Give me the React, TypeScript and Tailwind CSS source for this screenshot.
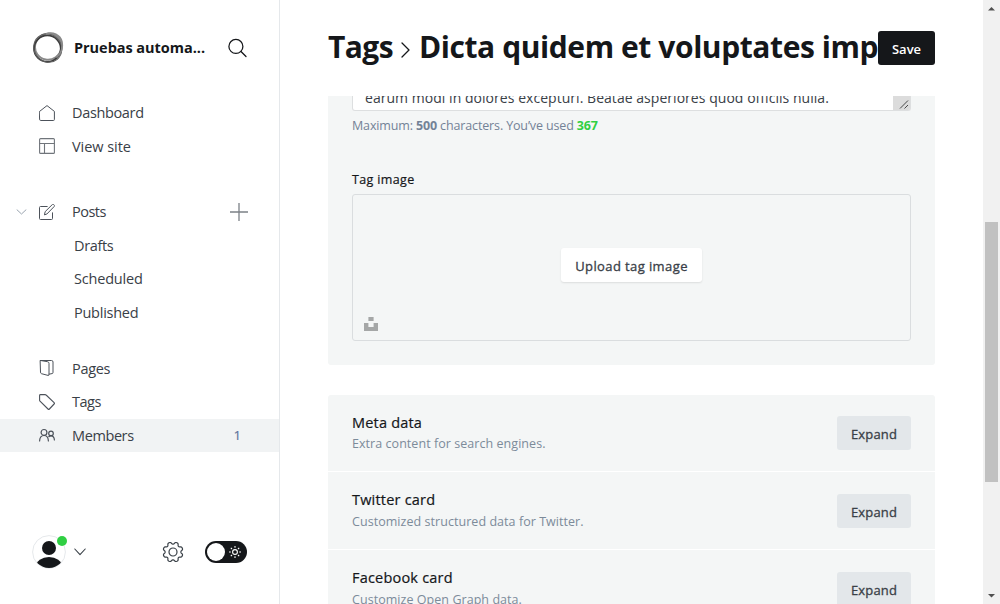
import React from "react";

const line = {
  fill: "none",
  stroke: "currentColor",
  strokeLinecap: "round" as const,
  strokeLinejoin: "round" as const,
};

// Outline of an eight-toothed gear centred in a 22px box.
const gearOutline =
  Array.from({ length: 96 }, (_, i) => {
    const angle = (i / 96) * Math.PI * 2;
    const radius = 8.9 + 1.2 * Math.tanh(1.6 * Math.cos(8 * (angle - Math.PI / 8)) + 0.3);
    const x = (11 + radius * Math.cos(angle)).toFixed(2);
    const y = (11 + radius * Math.sin(angle)).toFixed(2);
    return `${i === 0 ? "M" : "L"}${x} ${y}`;
  }).join("") + "Z";

function NavItem({ icon, label, tracking, className = "", children }: {
  icon: React.ReactNode;
  label: string;
  tracking: string;
  className?: string;
  children?: React.ReactNode;
}) {
  return (
    <a className={`flex h-[33.5px] items-center pl-[39px] ${className}`}>
      <span className="flex w-[33px] shrink-0 text-[#4c525a]">{icon}</span>
      <span className={`flex-1 pt-px ${tracking}`}>{label}</span>
      {children}
    </a>
  );
}

function SubItem({ label, tracking }: { label: string; tracking: string }) {
  return <a className={`flex h-[33.5px] items-center pl-[74px] pt-px ${tracking}`}>{label}</a>;
}

function Sidebar() {
  return (
    <aside className="flex h-full w-[280px] shrink-0 flex-col border-r border-[#e5e8eb] text-[14.5px] text-[#394047]">
      <div className="flex h-24 items-center pl-8 pr-[32px]">
        <svg className="shrink-0" width="32" height="32" viewBox="0 0 32 32" fill="none">
          <ellipse cx="17" cy="15" rx="13.400" ry="13" stroke="#8a8a8a" strokeWidth="2" transform="rotate(-35 16 16)" />
          <ellipse cx="15.400" cy="16.600" rx="13.400" ry="13.200" stroke="#3c3c3c" strokeWidth="1.800" />
          <ellipse cx="15.900" cy="16.200" rx="14.700" ry="13.600" stroke="#606060" strokeWidth="1" transform="rotate(50 16 16)" />
          <path d="M14 2C21-.5 28 3 29.800 9.500c1.200 6-.5 12-5.500 16" stroke="#8a8a8a" strokeWidth="1.800" />
        </svg>
        <span className="ml-[10px] w-[140px] shrink-0 whitespace-nowrap text-[14.5px] font-bold tracking-[-0.04px] text-[#15171a]">
          Pruebas automa...
        </span>
        <svg className="ml-[13px] shrink-0" width="20" height="20" viewBox="0 0 20 20" {...line} stroke="#15171a" strokeWidth="1.25">
          <circle cx="8.9" cy="8.4" r="7" />
          <path d="M14 13.5l5 5" />
        </svg>
      </div>

      <nav className="flex h-[414px] flex-col">
        <NavItem label="Dashboard" tracking="tracking-[-0.35px]" icon={
          <svg width="16" height="16" viewBox="0 0 16 16" {...line}>
            <path d="M.6 6.4 8 .6l7.4 5.8v8.1a1 1 0 0 1-1 1H1.600a1 1 0 0 1-1-1z" />
          </svg>
        } />
        <NavItem label="View site" tracking="tracking-[-0.05px]" icon={
          <svg width="16" height="16" viewBox="0 0 16 16" {...line} stroke="#70757b" strokeWidth="1.1">
            <rect x=".6" y=".6" width="14.8" height="14.8" rx="1" />
            <path d="M.6 5.500h14.800M5.500 5.500v9.900" />
          </svg>
        } />

        <div className="mt-8 flex h-[33.5px] items-center">
          <svg className="ml-4 mr-[12px]" width="11" height="6" viewBox="0 0 11 6" {...line} stroke="#9aa4af">
            <path d="M1 .8l4.500 4.200L10 .8" />
          </svg>
          <span className="flex w-[33px]">
            <svg className="text-[#4c525a]" width="16" height="16" viewBox="0 0 16 16" {...line}>
              <path d="M13.500 8.800v5.700a1 1 0 0 1-1 1h-11a1 1 0 0 1-1-1v-11a1 1 0 0 1 1-1h6.700" />
              <path d="M5.500 10.500l.7-2.900 7-6.900c.6-.5 1.300-.4 1.800.1s.6 1.200.1 1.800l-6.900 7.100z" />
            </svg>
          </span>
          <span className="flex-1 tracking-[-0.5px]">Posts</span>
          <svg className="mr-[31px]" width="18" height="18" viewBox="0 0 18 18" fill="none" stroke="#7c8187" strokeWidth="1.300">
            <path d="M9 0v18M0 9h18" />
          </svg>
        </div>
        <SubItem label="Drafts" tracking="tracking-[-0.35px]" />
        <SubItem label="Scheduled" tracking="tracking-[-0.2px]" />
        <SubItem label="Published" tracking="tracking-[-0.25px]" />

        <NavItem className="mt-[22.500px]" label="Pages" tracking="tracking-[-0.3px]" icon={
          <svg width="16" height="16" viewBox="0 0 16 16" {...line}>
            <path d="M1.500.5 8.500 1.700q1.500.3 1.500 1.700v11.200q0 1.100-1 .8L2.500 13.700q-1-.3-1-1.200z" />
            <path d="M1.500.5h11q1.500 0 1.500 1.500v10.500q0 1-1 1.100L10 14.200" />
          </svg>
        } />
        <NavItem label="Tags" tracking="tracking-[-0.5px]" icon={
          <svg width="16" height="16" viewBox="0 0 16 16" {...line} strokeWidth="1.100">
            <path d="M1.500.6h4.600q.6 0 1 .4l8 7.600q.7.700 0 1.400l-4.700 5q-.7.700-1.400 0L1 7.200Q.6 6.800.6 6.200V1.500q0-.9.9-.9z" />
          </svg>
        } />
        <NavItem className="bg-[#f1f3f4]" label="Members" tracking="tracking-[-0.4px]" icon={
          <svg width="16" height="16" viewBox="0 0 16 16" {...line} strokeWidth="1.200">
            <circle cx="5" cy="5.400" r="2.900" />
            <circle cx="12" cy="6.400" r="2.300" />
            <path d="M.6 14q.2-5.500 4.400-5.500T9.400 14M9.800 9.700q1-.9 2.200-.9 3.200 0 3.400 4.200" />
          </svg>
        }>
          <span className="mr-[38px] pt-[3px] text-[12.500px] text-[#5d7199] [-webkit-text-stroke:0.2px]">1</span>
        </NavItem>
      </nav>

      <div className="mt-[24px] flex h-9 items-center">
        <div className="relative ml-8 h-[34px] w-[34px]">
          <svg width="34" height="34" viewBox="0 0 34 34">
            <defs><clipPath id="avatar"><circle cx="17" cy="17" r="16" /></clipPath></defs>
            <circle cx="17" cy="17" r="16.400" fill="#fff" stroke="#e5e8eb" />
            <g clipPath="url(#avatar)" fill="#15171a">
              <circle cx="17" cy="13" r="7" />
              <ellipse cx="17" cy="31.500" rx="13" ry="9.500" />
            </g>
          </svg>
          <span className="absolute left-[25px] top-[1px] h-[10px] w-[10px] rounded-full bg-[#30cf43]" />
        </div>
        <svg className="ml-2" width="12" height="8" viewBox="0 0 12 8" {...line} stroke="#394047" strokeWidth="1.100">
          <path d="M.8 1 6 6.600 11.200 1" />
        </svg>
        <svg className="ml-[76px]" width="22" height="22" viewBox="0 0 22 22" {...line} stroke="#394047" strokeWidth="1.200">
          <circle cx="11" cy="11" r="4" />
          <path d={gearOutline} />
        </svg>
        <div className="ml-[21px] flex h-[22px] w-[42px] items-center justify-between rounded-full bg-[#15171a] pl-[2px] pr-[6px]">
          <span className="h-[18px] w-[18px] rounded-full bg-white" />
          <svg width="12" height="12" viewBox="0 0 12 12" fill="none" stroke="#fff" strokeWidth="1.100">
            <circle cx="6" cy="6" r="2.400" />
            <path d="M6 0v1.800M6 10.200V12M0 6h1.800M10.200 6H12M1.800 1.800 3 3M9 9l1.200 1.200M1.800 10.200 3 9M9 3l1.200-1.200" />
          </svg>
        </div>
      </div>
    </aside>
  );
}

function ExpandRow({ title, text, first = false }: { title: string; text: string; first?: boolean }) {
  return (
    <section className={`flex shrink-0 justify-between px-6 ${first ? "h-[76px] pt-[21px]" : "h-[78px] border-t border-white pt-[22px]"}`}>
      <div className={`whitespace-nowrap ${first ? "-mt-[4px]" : "-mt-[5px]"}`}>
        <h4 className={`text-[14.500px] font-medium tracking-[0.2px] text-[#15171a] [-webkit-text-stroke:0.2px] ${first ? "leading-[21px]" : "leading-[22px]"}`}>{title}</h4>
        <p className="text-[12.500px] leading-[21px] tracking-[0.05px] text-[#7c8b9a]">{text}</p>
      </div>
      <button className="h-[34px] w-[74px] rounded-[3px] bg-[#e3e7ea] pt-[3px] text-[13px] font-medium tracking-[0.15px] text-[#394047] [-webkit-text-stroke:0.3px]">Expand</button>
    </section>
  );
}

export default function App() {
  return (
    <div className="flex h-[604px] w-[1000px] overflow-hidden bg-white font-['Open_Sans','Noto_Sans',sans-serif]">
      <Sidebar />
      <main className="flex h-full w-[703px] flex-col pl-12 pr-12">
        <header className="flex h-24 shrink-0 items-center">
          <h2 className="-mt-[2px] flex w-[550px] items-center overflow-hidden whitespace-nowrap text-[30px] font-bold leading-[44px] text-[#15171a]">
            <span className="tracking-[-0.6px]">Tags</span>
            <svg className="ml-2 mr-[9px] mt-[5px] shrink-0" width="9" height="16" viewBox="0 0 9 16" {...line} strokeWidth="1.300">
              <path d="M1 1l7 7-7 7" />
            </svg>
            <span className="tracking-[-0.420px]">Dicta quidem et voluptates imp</span>
          </h2>
          <button className="h-[34px] w-[57px] shrink-0 rounded-[3px] bg-[#15171a] pt-[3px] text-[13px] font-semibold text-white">Save</button>
        </header>

        <div className="flex h-[508px] w-[607px] flex-col overflow-hidden">
          <section className="h-[269px] shrink-0 rounded-b-[3px] bg-[#f4f6f6] px-6">
            <div className="flex h-[15px] items-end justify-between overflow-hidden rounded-b-[3px] border border-t-0 border-[#dddfe0] bg-white pl-3">
              <span className="-mb-px whitespace-nowrap text-[14px] leading-[26px] tracking-[0.040px] text-[#394047]">
                earum modi in dolores excepturi. Beatae asperiores quod officiis nulla.
              </span>
              <span className="flex h-[14px] w-[17px] shrink-0 items-end justify-end bg-[#dcdcdc]">
                <svg width="11" height="11" viewBox="0 0 11 11" stroke="#484848" strokeWidth="1">
                  <path d="M1 9.500 9 1.500M5.500 9.500 9 6" />
                </svg>
              </span>
            </div>
            <p className="mt-[5px] whitespace-nowrap text-[12.500px] leading-[20px] tracking-[-0.140px] text-[#738296]">
              Maximum: <b>500</b> characters. You’ve used <b className="text-[#30cf43]">367</b>
            </p>
            <p className="mt-[34px] text-[12.500px] font-medium leading-[20px] tracking-[0.35px] text-[#15171a] [-webkit-text-stroke:0.2px]">Tag image</p>
            <div className="mt-1 flex h-[147px] flex-col items-center rounded-[3px] border border-[#dadddf] pt-[53px]">
              <button className="h-[34px] w-[141px] rounded-[3px] bg-white pt-[3px] text-[13px] font-medium tracking-[0.4px] text-[#394047] shadow-[0_1px_2px_rgba(0,0,0,0.1)] [-webkit-text-stroke:0.3px]">
                Upload tag image
              </button>
              <svg className="ml-[11px] mt-[35px] self-start" width="14" height="14" viewBox="0 0 14 14" fill="#a5a7a7">
                <path d="M4.400 0h5.200v4H4.400zM0 6h4.400v4h5.200V6H14v8H0z" />
              </svg>
            </div>
          </section>

          <div className="mt-[30px] flex shrink-0 flex-col rounded-t-[3px] bg-[#f4f6f6]">
            <ExpandRow first title="Meta data" text="Extra content for search engines." />
            <ExpandRow title="Twitter card" text="Customized structured data for Twitter." />
            <ExpandRow title="Facebook card" text="Customize Open Graph data." />
          </div>
        </div>
      </main>

      <div className="flex h-full w-[17px] shrink-0 flex-col items-center bg-[#f1f1f1]">
        <svg width="17" height="17" viewBox="0 0 17 17" fill="#505050"><path d="M5 10.500h7L8.500 7z" /></svg>
        <div className="mt-[205px] h-[260px] w-[13px] bg-[#c1c1c1]" />
        <svg className="mt-auto" width="17" height="17" viewBox="0 0 17 17" fill="#505050"><path d="M5 7h7l-3.500 3.500z" /></svg>
      </div>
    </div>
  );
}
